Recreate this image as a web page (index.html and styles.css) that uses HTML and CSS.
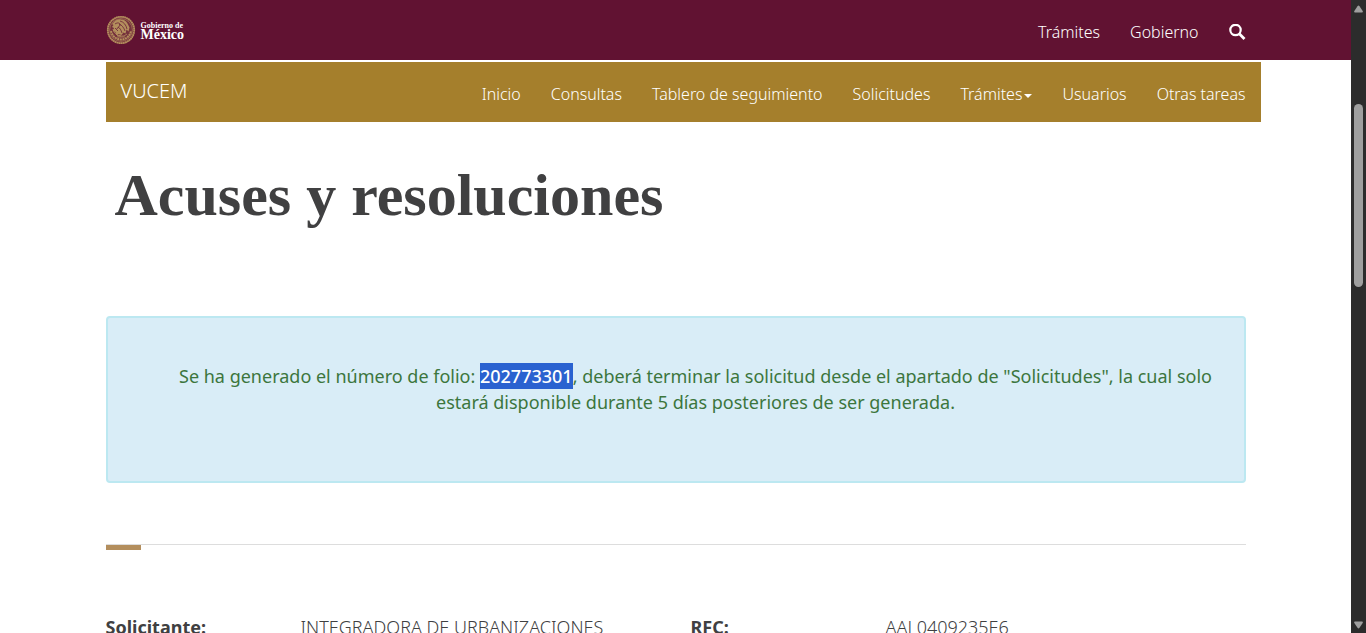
FILE: index.html
```html
<!DOCTYPE html>
<html lang="es">
<head>
<meta charset="utf-8">
<meta name="viewport" content="width=device-width, initial-scale=1">
<title>Acuses y resoluciones</title>
<link rel="stylesheet" href="styles.css">
</head>
<body>
<div class="window">
  <div class="page">
    <header class="gov-bar">
      <div class="container gov-inner">
        <a class="gov-logo" href="#">
          <svg class="seal" viewBox="0 0 30 30" aria-hidden="true">
            <circle cx="15" cy="15" r="14" fill="#b38e5d" opacity=".25"/>
            <g fill="none" stroke="#b38e5d">
              <circle cx="15" cy="15" r="13.200" stroke-width="1.800" stroke-dasharray="1.800 .3"/>
              <circle cx="15" cy="15" r="11.400" stroke-width=".8" opacity=".7"/>
              <path d="M5 16c1 5 5 8.500 10 8.500s9-3.500 10-8.500" stroke-width="2" stroke-dasharray="2 .6"/>
              <path d="M7 14c1 4 4 6.500 8 7" stroke-width="1"/>
            </g>
            <path fill="#b38e5d" d="M8 7c2-2 4-3 7-2.500 3 0 5 1.500 6.500 4l2 4-1 4-2-2-1 4-2-1-2 2.500-3-1-2 1-1-3-2.500-1 1-3-2-1 1.500-2-1.500-1z"/>
            <path fill="none" stroke="#611232" stroke-width=".7" d="M9 9c3-2 5-1 5 1s-3 2-3 4M14 6c4 1 6 4 7 8M13 9c3 1 5 4 6 7M12 12c2 1 3 3 4 6M9 13l3 3"/>
            <path fill="none" stroke="#b38e5d" stroke-width=".8" d="M10 19l2 2h6l3-2M11 22h8"/>
          </svg>
          <span class="gov-name"><span class="gov-small">Gobierno de</span><strong class="gov-big">México</strong></span>
        </a>
        <nav class="gov-links" aria-label="Gobierno">
          <a href="#">Trámites</a>
          <a href="#">Gobierno</a>
          <a class="search" href="#" aria-label="Buscar">
            <svg viewBox="0 0 17 17" aria-hidden="true"><circle cx="6.500" cy="6" r="5.200" fill="none" stroke="#fff" stroke-width="2.200"/><path d="M10.300 9.800l5.200 5.200" stroke="#fff" stroke-width="2.800"/></svg>
          </a>
        </nav>
      </div>
    </header>
    <div class="container">
      <nav class="subnav" aria-label="VUCEM">
        <a class="brand" href="#">VUCEM</a>
        <ul class="menu">
          <li><a href="#">Inicio</a></li>
          <li><a href="#">Consultas</a></li>
          <li><a href="#">Tablero de seguimiento</a></li>
          <li><a href="#">Solicitudes</a></li>
          <li><a href="#">Trámites<span class="caret"></span></a></li>
          <li><a href="#">Usuarios</a></li>
          <li><a href="#">Otras tareas</a></li>
        </ul>
      </nav>
      <main>
        <h1 class="title">Acuses y resoluciones</h1>
        <div class="alert">
          <p class="alert-text">Se ha generado el número de folio: <mark class="folio">202773301</mark>, deberá terminar la solicitud desde el apartado de "Solicitudes", la cual solo estará disponible durante 5 días posteriores de ser generada.</p>
        </div>
        <div class="divider"></div>
        <dl class="details">
          <dt>Solicitante:</dt>
          <dd>INTEGRADORA DE URBANIZACIONES</dd>
          <dt>RFC:</dt>
          <dd>AAL0409235E6</dd>
        </dl>
      </main>
    </div>
  </div>
  <div class="scrollbar" aria-hidden="true">
    <svg class="arrow" viewBox="0 0 9 8"><path d="M3.500 1.200q1-1.400 2 0L8.700 6q.6 1.500-.7 1.500H1Q-.3 7.500.3 6z" fill="#9f9f9f"/></svg>
    <div class="track"><div class="thumb"></div></div>
    <svg class="arrow" viewBox="0 0 9 8"><path d="M3.500 6.800q1 1.400 2 0L8.700 2q.6-1.500-.7-1.500H1Q-.3.5.3 2z" fill="#9f9f9f"/></svg>
  </div>
</div>
</body>
</html>
```
FILE: styles.css
```css
* { box-sizing: border-box; }

body {
  margin: 0;
  background: #fff;
  color: #404041;
  font-family: "Noto Sans", sans-serif;
  font-size: 18px;
  font-weight: 300;
  line-height: 26px;
}

a { color: inherit; text-decoration: none; }

.window { display: flex; height: 100vh; }
.page { flex: 1; min-width: 0; overflow: hidden; }
.container { width: calc(100% - 30px); max-width: 1140px; margin: 0 auto; }

.gov-bar { background: #611232; color: #fff; }
.gov-inner { display: flex; justify-content: space-between; align-items: center; height: 60px; }
.gov-logo { display: flex; align-items: center; gap: 5px; }
.seal { width: 30px; height: 30px; }
.gov-name { display: flex; flex-direction: column; font-family: "Liberation Serif", serif; }
.gov-small { font-size: 8px; font-weight: 700; line-height: 9px; }
.gov-big { font-size: 14px; font-weight: 700; line-height: 10px; }
.gov-links { display: flex; align-items: center; gap: 30px; padding-top: 4px; font-size: 16px; }
.search svg { display: block; width: 17px; height: 17px; }

.subnav {
  display: flex;
  justify-content: space-between;
  height: 60px;
  margin: 2px -15px 0 0;
  padding: 0 15px;
  background: #a57f2c;
  color: #fff;
}
.brand { padding-top: 16px; font-size: 20px; }
.menu { display: flex; gap: 30px; margin: 0; padding: 19px 0 0; list-style: none; font-size: 16px; }
.caret {
  display: inline-block;
  margin-left: 2px;
  border: 4px solid transparent;
  border-top-color: #fff;
  border-bottom: 0;
  vertical-align: middle;
}

.title {
  margin: 40px 0 88px;
  padding-left: 9px;
  font-family: "Liberation Serif", serif;
  font-size: 60px;
  font-weight: 700;
  line-height: 66px;
}

.alert {
  padding: 45px 30px 66px 70px;
  border: 2px solid #bce8f1;
  border-radius: 4px;
  background: #d9edf7;
  color: #3c763d;
  text-align: center;
}
.alert-text { margin: 0; font-weight: 400; }
.folio { padding: 1px 0; background: #2a62d0; color: #fff; font-weight: 500; }

.divider { margin-top: 61px; border-top: 1px solid #ddd; }
.divider::after { content: ""; display: block; width: 35px; height: 5px; background: #b38e5d; }

.details { display: grid; grid-template-columns: 2fr 4fr 2fr 4fr; margin: 64px -30px 0 0; }
.details dt { font-weight: 700; }
.details dd { margin: 0; }

.scrollbar {
  display: flex;
  flex-direction: column;
  align-items: center;
  width: 15px;
  padding: 5px 0 4px;
  background: #2c2c2c;
}
.arrow { width: 9px; height: 8px; }
.track { display: flex; flex: 1; flex-direction: column; }
.track::before { content: ""; flex: 91; }
.track::after { content: ""; flex: 334; }
.thumb { flex: 183; width: 9px; border-radius: 5px; background: #9f9f9f; }
```
